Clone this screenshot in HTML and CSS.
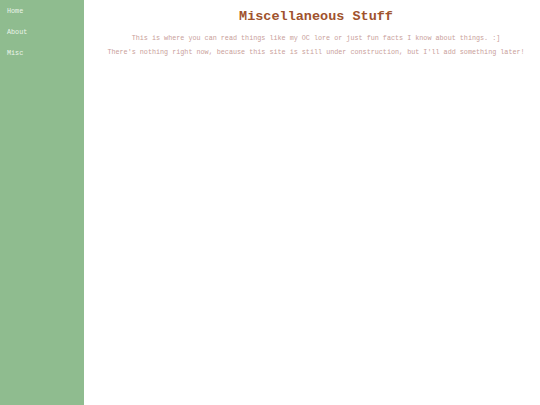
FILE: index.html
```html
<!DOCTYPE html>
<html>
<head>
<meta charset="utf-8">
<title>Misc</title>
<link rel="stylesheet" href="styles.css">
</head>
<body>
<nav class="sidebar">
  <a class="nav-link" href="#">Home</a>
  <a class="nav-link" href="#">About</a>
  <a class="nav-link" href="#">Misc</a>
</nav>
<main class="content">
  <h1 class="title">Miscellaneous Stuff</h1>
  <p class="text">This is where you can read things like my OC lore or just fun facts I know about things. :]</p>
  <p class="text">There's nothing right now, because this site is still under construction, but I'll add something later!</p>
</main>
</body>
</html>
```
FILE: styles.css
```css
html, body {
  margin: 0;
  padding: 0;
  height: 100%;
  background: #ffffff;
}
body {
  display: flex;
  font-family: "Liberation Mono", "Courier New", monospace;
  font-size: 6.75px;
}
.sidebar {
  width: 84px;
  flex: none;
  background: #8fbc8f;
  display: flex;
  flex-direction: column;
  gap: 13px;
  padding: 7px 0 0 7px;
  box-sizing: border-box;
  height: 100%;
}
.nav-link {
  color: #eaf4ea;
  text-decoration: none;
  line-height: 8px;
}
.content {
  flex: 1;
  margin-left: 8px;
  text-align: center;
}
.title {
  font-size: 13.5px;
  color: #a0522d;
  margin: 9px 0 10px 0;
}
.text {
  color: #c9a09a;
  margin: 6px 0;
}
```
